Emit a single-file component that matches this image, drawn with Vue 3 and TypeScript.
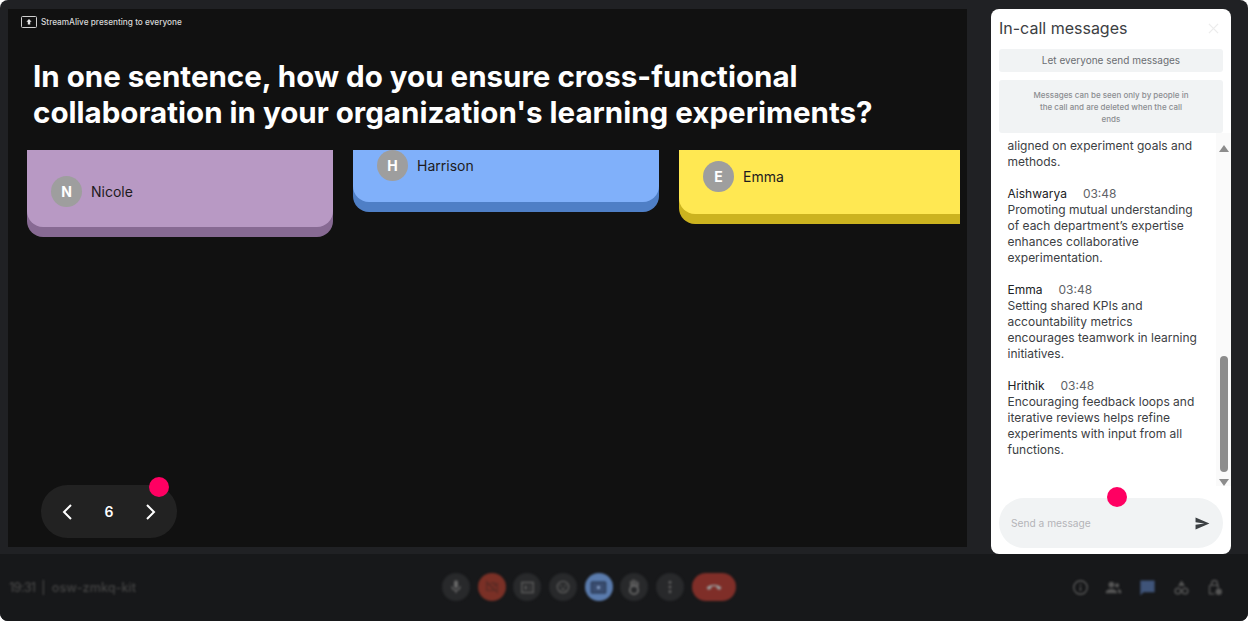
<template>
  <div class="meet">
    <main class="top">
      <section class="stage">
        <div class="present-tag">
          <svg class="present-icon" viewBox="0 0 16 12" width="16" height="12">
            <rect x="0.5" y="0.5" width="15" height="11" rx="1" fill="none" stroke="#cfcfcf" />
            <path d="M8 3 10.6 5.8H9.2V8.6H6.8V5.8H5.4Z" fill="#e4e4e4" />
          </svg>
          <span>StreamAlive presenting to everyone</span>
        </div>
        <h1 class="question">
          In one sentence, how do you ensure cross-functional<br />
          collaboration in your organization's learning experiments?
        </h1>
        <div class="cards">
          <div v-for="card in cards" :key="card.name" class="card" :class="card.tone">
            <span class="avatar">{{ card.name[0] }}</span>
            <span class="card-name">{{ card.name }}</span>
          </div>
        </div>
        <div class="pager">
          <svg viewBox="0 0 14 20" width="14" height="20">
            <path d="M11 3 4 10l7 7" fill="none" stroke="#fff" stroke-width="2" />
          </svg>
          <span class="page-no">6</span>
          <svg viewBox="0 0 14 20" width="14" height="20">
            <path d="M3 3l7 7-7 7" fill="none" stroke="#fff" stroke-width="2" />
          </svg>
        </div>
        <span class="pointer pointer-stage"></span>
      </section>

      <aside class="chat">
        <header class="chat-head">
          <h2>In-call messages</h2>
          <svg viewBox="0 0 12 12" width="11" height="11">
            <path d="M1 1l10 10M11 1 1 11" stroke="#ececec" stroke-width="1.4" />
          </svg>
        </header>
        <div class="let-all">Let everyone send messages</div>
        <p class="notice">Messages can be seen only by people in the call and are deleted when the call ends</p>
        <div class="log">
          <div class="log-list">
            <div v-for="(msg, i) in messages" :key="i" class="msg">
              <div v-if="msg.name" class="msg-head">
                <span class="msg-name">{{ msg.name }}</span>
                <span class="msg-time">03:48</span>
              </div>
              <div class="msg-text">{{ msg.text }}</div>
            </div>
          </div>
          <div class="scrollbar">
            <span class="arrow arrow-up"></span>
            <span class="thumb"></span>
            <span class="arrow arrow-down"></span>
          </div>
        </div>
        <div class="send">
          <span class="placeholder">Send a message</span>
          <svg viewBox="0 0 16 14" width="15" height="13">
            <path d="M0.5 0.5 15.5 7 .5 13.5V8.4L10 7 .5 5.6Z" fill="#3c4043" />
          </svg>
        </div>
        <span class="pointer pointer-chat"></span>
      </aside>
    </main>

    <footer class="bar">
      <div class="meeting-id"><span class="clock">19:31</span><span class="sep">|</span>osw-zmkq-kit</div>
      <div class="controls">
        <button class="ctl">
          <svg viewBox="0 0 24 24" width="16" height="16">
            <path d="M12 14a3 3 0 0 0 3-3V5a3 3 0 0 0-6 0v6a3 3 0 0 0 3 3Zm5-3a5 5 0 0 1-10 0H5a7 7 0 0 0 6 6.9V21h2v-3.1A7 7 0 0 0 19 11Z" fill="#666" />
          </svg>
        </button>
        <button class="ctl ctl-red">
          <svg viewBox="0 0 24 24" width="16" height="16">
            <path d="M4 7h2l10 10H4V7Zm6-1h6v4l4-3v10l-1 .5M3 3l18 18" fill="none" stroke="#5a2a24" stroke-width="2" />
          </svg>
        </button>
        <button class="ctl">
          <svg viewBox="0 0 24 24" width="17" height="17">
            <path d="M4 5h16v14H4Z" fill="none" stroke="#5c5c5c" stroke-width="2" />
            <path d="M8 9h3v6H8ZM14 9h2v2h-2ZM14 13h2v2h-2Z" fill="#5c5c5c" />
          </svg>
        </button>
        <button class="ctl">
          <svg viewBox="0 0 24 24" width="16" height="16">
            <circle cx="12" cy="12" r="8.5" fill="none" stroke="#5c5c5c" stroke-width="2" />
            <circle cx="9" cy="10" r="1.3" fill="#5c5c5c" />
            <circle cx="15" cy="10" r="1.3" fill="#5c5c5c" />
            <path d="M8 16c2-3 6-3 8 0Z" fill="#5c5c5c" />
          </svg>
        </button>
        <button class="ctl ctl-blue">
          <svg viewBox="0 0 24 24" width="19" height="19">
            <rect x="3" y="5" width="18" height="14" rx="1" fill="#3a4d70" stroke="#2e3f5c" stroke-width="2" />
            <rect x="10" y="10" width="4" height="4" fill="#7f97bd" />
          </svg>
        </button>
        <button class="ctl">
          <svg viewBox="0 0 24 24" width="18" height="18">
            <path d="M7 4h2v8H7ZM10 2h2v9h-2ZM13 3h2v8h-2ZM16 5h2v7h-2Z" fill="#666" />
            <circle cx="12" cy="16" r="5.500" fill="none" stroke="#666" stroke-width="2.500" />
          </svg>
        </button>
        <button class="ctl">
          <svg viewBox="0 0 24 24" width="16" height="16">
            <circle cx="12" cy="5" r="2" fill="#666" />
            <circle cx="12" cy="12" r="2" fill="#666" />
            <circle cx="12" cy="19" r="2" fill="#666" />
          </svg>
        </button>
        <button class="ctl ctl-end">
          <svg viewBox="0 0 24 24" width="18" height="18">
            <path d="M12 9c-5 0-9 2-10 4l2.500 3 4-2v-2.500c2-.6 5-.6 7 0V14l4 2 2.500-3c-1-2-5-4-10-4Z" fill="#999" />
          </svg>
        </button>
      </div>
      <div class="side-icons">
        <svg viewBox="0 0 24 24" width="17" height="17">
          <circle cx="12" cy="12" r="9.500" fill="none" stroke="#555" stroke-width="2" />
          <path d="M11 11h2v6h-2ZM11 7h2v2h-2Z" fill="#555" />
        </svg>
        <svg viewBox="0 0 24 24" width="17" height="17">
          <circle cx="9" cy="8" r="4" fill="#555" />
          <circle cx="17" cy="9" r="3" fill="#555" />
          <path d="M1 19c0-3 4-5 8-5s8 2 8 5v1H1ZM18 14c3 0 5 2 5 4v2h-4c0-2-.3-4-1-6Z" fill="#555" />
        </svg>
        <svg viewBox="0 0 24 24" width="19" height="19">
          <path d="M3 3h18v15H7l-4 4Z" fill="#3f5479" />
        </svg>
        <svg viewBox="0 0 24 24" width="17" height="17">
          <path d="M12 2l5 8H7Z" fill="#555" />
          <circle cx="7" cy="17" r="4" fill="none" stroke="#555" stroke-width="2" />
          <circle cx="17" cy="17" r="4" fill="none" stroke="#555" stroke-width="2" />
        </svg>
        <svg viewBox="0 0 24 24" width="17" height="17">
          <path d="M5 9h12v4M5 9v12h7M8 9V6a4 4 0 0 1 8 0v3" fill="none" stroke="#555" stroke-width="2" />
          <circle cx="18" cy="18" r="4.500" fill="#555" />
        </svg>
      </div>
    </footer>
  </div>
</template>

<script setup lang="ts">
interface Card {
  name: string;
  tone: string;
}

interface Message {
  name?: string;
  text: string;
}

const cards: Card[] = [
  { name: 'Nicole', tone: 'card-purple' },
  { name: 'Harrison', tone: 'card-blue' },
  { name: 'Emma', tone: 'card-yellow' }
];

const messages: Message[] = [
  { text: 'aligned on experiment goals and methods.' },
  {
    name: 'Aishwarya',
    text: 'Promoting mutual understanding of each department’s expertise enhances collaborative experimentation.'
  },
  {
    name: 'Emma',
    text: 'Setting shared KPIs and accountability metrics encourages teamwork in learning initiatives.'
  },
  {
    name: 'Hrithik',
    text: 'Encouraging feedback loops and iterative reviews helps refine experiments with input from all functions.'
  }
];
</script>

<style>
html,
body {
  margin: 0;
  background: #fff;
}
</style>

<style scoped>
.meet {
  width: 1248px;
  height: 621px;
  display: flex;
  flex-direction: column;
  background: #202124;
  border-radius: 8px;
  overflow: hidden;
  font-family: Inter, 'Liberation Sans', sans-serif;
}

.top {
  height: 554px;
  display: flex;
  padding: 9px 17px 0 8px;
  box-sizing: border-box;
  gap: 24px;
}

/* Stage */
.stage {
  position: relative;
  width: 959px;
  height: 538px;
  background: #111111;
  overflow: hidden;
}

.present-tag {
  display: flex;
  align-items: center;
  gap: 4px;
  height: 12px;
  padding: 7px 0 0 13px;
  color: #d8d8d8;
  font-size: 8.25px;
  font-weight: 500;
}

.present-icon {
  flex: none;
}

.question {
  margin: 30px 0 0 25px;
  color: #fff;
  font-size: 29.55px;
  line-height: 36px;
  font-weight: 700;
  white-space: nowrap;
}

.cards {
  display: flex;
  align-items: flex-start;
  gap: 20px;
  width: 933px;
  height: 100px;
  margin: 20px 0 0 19px;
  overflow: hidden;
}

.card {
  flex: none;
  width: 306px;
  display: flex;
  align-items: center;
  gap: 9px;
  box-sizing: border-box;
  padding-left: 24px;
  border-radius: 0 0 16px 16px;
  color: #1d1b20;
  font-size: 14px;
}

.card-purple {
  height: 77px;
  padding-top: 6px;
  background: #b899c4;
  box-shadow: 0 10px 0 #876a93;
}

.card-blue {
  height: 52px;
  background: #80b0fa;
  box-shadow: 0 10px 0 #4f7fc6;
  padding-bottom: 21px;
}

.card-yellow {
  height: 64px;
  background: #ffe852;
  box-shadow: 0 10px 0 #ccb31f;
  padding-bottom: 11px;
}

.avatar {
  width: 31px;
  height: 31px;
  border-radius: 50%;
  background: #9e9e9e;
  color: #fff;
  font-weight: 700;
  display: flex;
  align-items: center;
  justify-content: center;
}

.pager {
  position: absolute;
  left: 33px;
  top: 476px;
  width: 136px;
  height: 53px;
  box-sizing: border-box;
  padding: 0 19px;
  border-radius: 27px;
  background: #222222;
  display: flex;
  align-items: center;
  justify-content: space-between;
}

.page-no {
  color: #fff;
  font-size: 14px;
  font-weight: 600;
  margin-bottom: 1px;
}

.pointer {
  position: absolute;
  width: 20px;
  height: 20px;
  border-radius: 50%;
  background: #ff0062;
}

.pointer-stage {
  left: 141px;
  top: 468px;
}

.pointer-chat {
  left: 116px;
  top: 478px;
}

/* Chat panel */
.chat {
  position: relative;
  width: 240px;
  height: 545px;
  box-sizing: border-box;
  background: #fff;
  border-radius: 8px;
  padding: 0 8px 6px;
  display: flex;
  flex-direction: column;
}

.chat-head {
  height: 38px;
  padding: 0 4px 2px 0;
  display: flex;
  align-items: center;
  justify-content: space-between;
}

.chat-head h2 {
  margin: 0;
  font-size: 16px;
  font-weight: 400;
  color: #3c4043;
}

.let-all {
  height: 23px;
  line-height: 23px;
  background: #f1f3f4;
  border-radius: 3px;
  text-align: center;
  font-size: 10px;
  color: #6b6e72;
}

.notice {
  margin: 8px 0 0;
  height: 53px;
  box-sizing: border-box;
  padding: 9px 34px 0;
  background: #f1f3f4;
  border-radius: 3px;
  text-align: center;
  font-size: 8px;
  font-weight: 500;
  line-height: 12px;
  color: #8b8d91;
}

.log {
  flex: 1;
  display: flex;
  min-height: 0;
  margin-right: -8px;
}

.log-list {
  flex: 1;
  padding: 5px 16px 0 8.5px;
  font-size: 12px;
  line-height: 16px;
  color: #3c4043;
}

.msg {
  margin-bottom: 16px;
}

.msg-head {
  display: flex;
  gap: 16px;
}

.msg-name {
  color: #202124;
}

.msg-time {
  color: #5f6368;
}

.scrollbar {
  flex: none;
  width: 15px;
  margin-bottom: 12px;
  background: #fafafa;
  display: flex;
  flex-direction: column;
  align-items: center;
  padding-top: 12px;
  box-sizing: border-box;
}

.arrow {
  width: 0;
  height: 0;
  border-left: 5px solid transparent;
  border-right: 5px solid transparent;
}

.arrow-up {
  border-bottom: 7px solid #8c8c8c;
}

.arrow-down {
  border-top: 7px solid #8c8c8c;
  margin-top: 7px;
}

.thumb {
  width: 8px;
  height: 116px;
  margin-top: auto;
  border-radius: 4px;
  background: #8c8c8c;
}

.send {
  height: 50px;
  flex: none;
  border-radius: 25px;
  background: #f1f3f4;
  display: flex;
  align-items: center;
  justify-content: space-between;
  padding: 0 13px 0 12px;
}

.placeholder {
  font-size: 10.2px;
  color: #b4b4b8;
}

/* Bottom bar, dimmed behind the presentation */
.bar {
  flex: 1;
  position: relative;
  background: #17181a;
  display: flex;
  align-items: center;
  justify-content: space-between;
  padding: 0 25px 0 9px;
}

.meeting-id {
  color: #444;
  font-size: 12.7px;
  font-weight: 500;
  filter: blur(1px);
}

.clock {
  letter-spacing: -0.8px;
}

.sep {
  margin: 0 6px;
}

.controls {
  position: absolute;
  left: 442px;
  top: 19px;
  display: flex;
  gap: 7.7px;
  filter: blur(1px);
}

.ctl {
  width: 28px;
  height: 28px;
  padding: 0;
  border: 0;
  border-radius: 50%;
  background: #28292b;
  display: flex;
  align-items: center;
  justify-content: center;
}

.ctl-red {
  background: #7a3026;
}

.ctl-blue {
  background: #5a7bad;
}

.ctl-end {
  width: 44px;
  border-radius: 14px;
  background: #7f2e28;
}

.side-icons {
  display: flex;
  gap: 16px;
  align-items: center;
  filter: blur(1px);
}
</style>
